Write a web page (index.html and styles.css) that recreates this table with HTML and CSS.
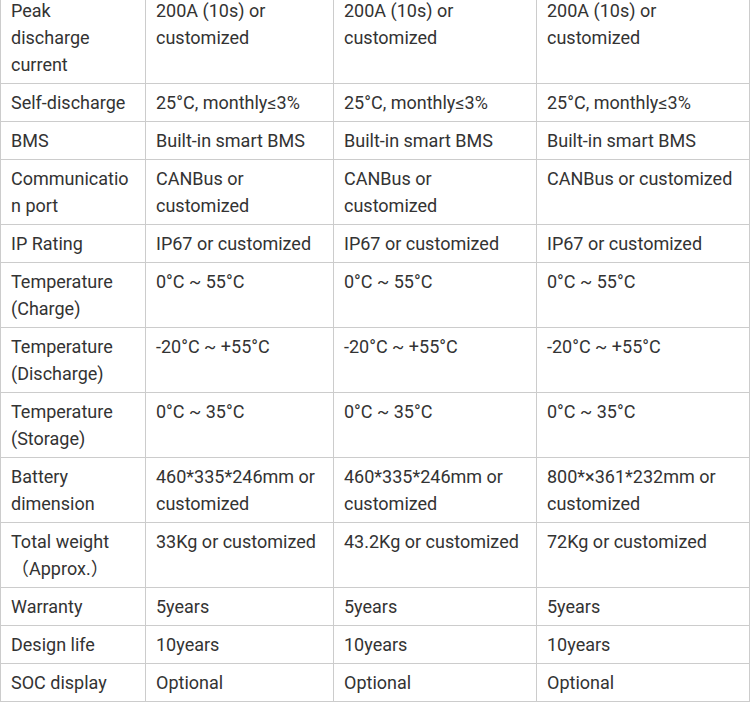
FILE: index.html
```html
<!DOCTYPE html>
<html>
<head>
<meta charset="utf-8">
<link rel="stylesheet" href="styles.css">
</head>
<body>
<div class="wrap">
<table class="spec">
<colgroup>
<col class="c1"><col class="c2"><col class="c3"><col class="c4">
</colgroup>
<tbody>
<tr><td>Peak<br>discharge current</td><td>200A (10s) or customized</td><td>200A (10s) or customized</td><td>200A (10s) or customized</td></tr>
<tr><td>Self-discharge</td><td>25°C, monthly≤3%</td><td>25°C, monthly≤3%</td><td>25°C, monthly≤3%</td></tr>
<tr><td>BMS</td><td>Built-in smart BMS</td><td>Built-in smart BMS</td><td>Built-in smart BMS</td></tr>
<tr><td>Communication port</td><td>CANBus or customized</td><td>CANBus or customized</td><td>CANBus or customized</td></tr>
<tr><td>IP Rating</td><td>IP67 or customized</td><td>IP67 or customized</td><td>IP67 or customized</td></tr>
<tr><td>Temperature (Charge)</td><td>0°C ~ 55°C</td><td>0°C ~ 55°C</td><td>0°C ~ 55°C</td></tr>
<tr><td>Temperature (Discharge)</td><td>-20°C ~ +55°C</td><td>-20°C ~ +55°C</td><td>-20°C ~ +55°C</td></tr>
<tr><td>Temperature (Storage)</td><td>0°C ~ 35°C</td><td>0°C ~ 35°C</td><td>0°C ~ 35°C</td></tr>
<tr><td>Battery dimension</td><td>460*335*246mm or customized</td><td>460*335*246mm or customized</td><td>800*×361*232mm or customized</td></tr>
<tr><td>Total weight（Approx.）</td><td>33Kg or customized</td><td>43.2Kg or customized</td><td>72Kg or customized</td></tr>
<tr><td>Warranty</td><td>5years</td><td>5years</td><td>5years</td></tr>
<tr><td>Design life</td><td>10years</td><td>10years</td><td>10years</td></tr>
<tr><td>SOC display</td><td>Optional</td><td>Optional</td><td>Optional</td></tr>
</tbody>
</table>
</div>
</body>
</html>
```
FILE: styles.css
```css
html, body {
  margin: 0;
  padding: 0;
  background: #fff;
}
.wrap {
  margin-top: -9px;
}
.spec {
  border-collapse: collapse;
  table-layout: fixed;
  width: 749px;
  font-family: Roboto, "Noto Sans CJK SC", sans-serif;
  font-size: 18px;
  line-height: 27px;
  color: #333;
}
.c1 { width: 145px; }
.c2 { width: 188px; }
.c3 { width: 203px; }
.c4 { width: 213px; }
.spec td {
  border: 1px solid #ccc;
  padding: 5px 10px;
  vertical-align: top;
  overflow-wrap: anywhere;
}
```
